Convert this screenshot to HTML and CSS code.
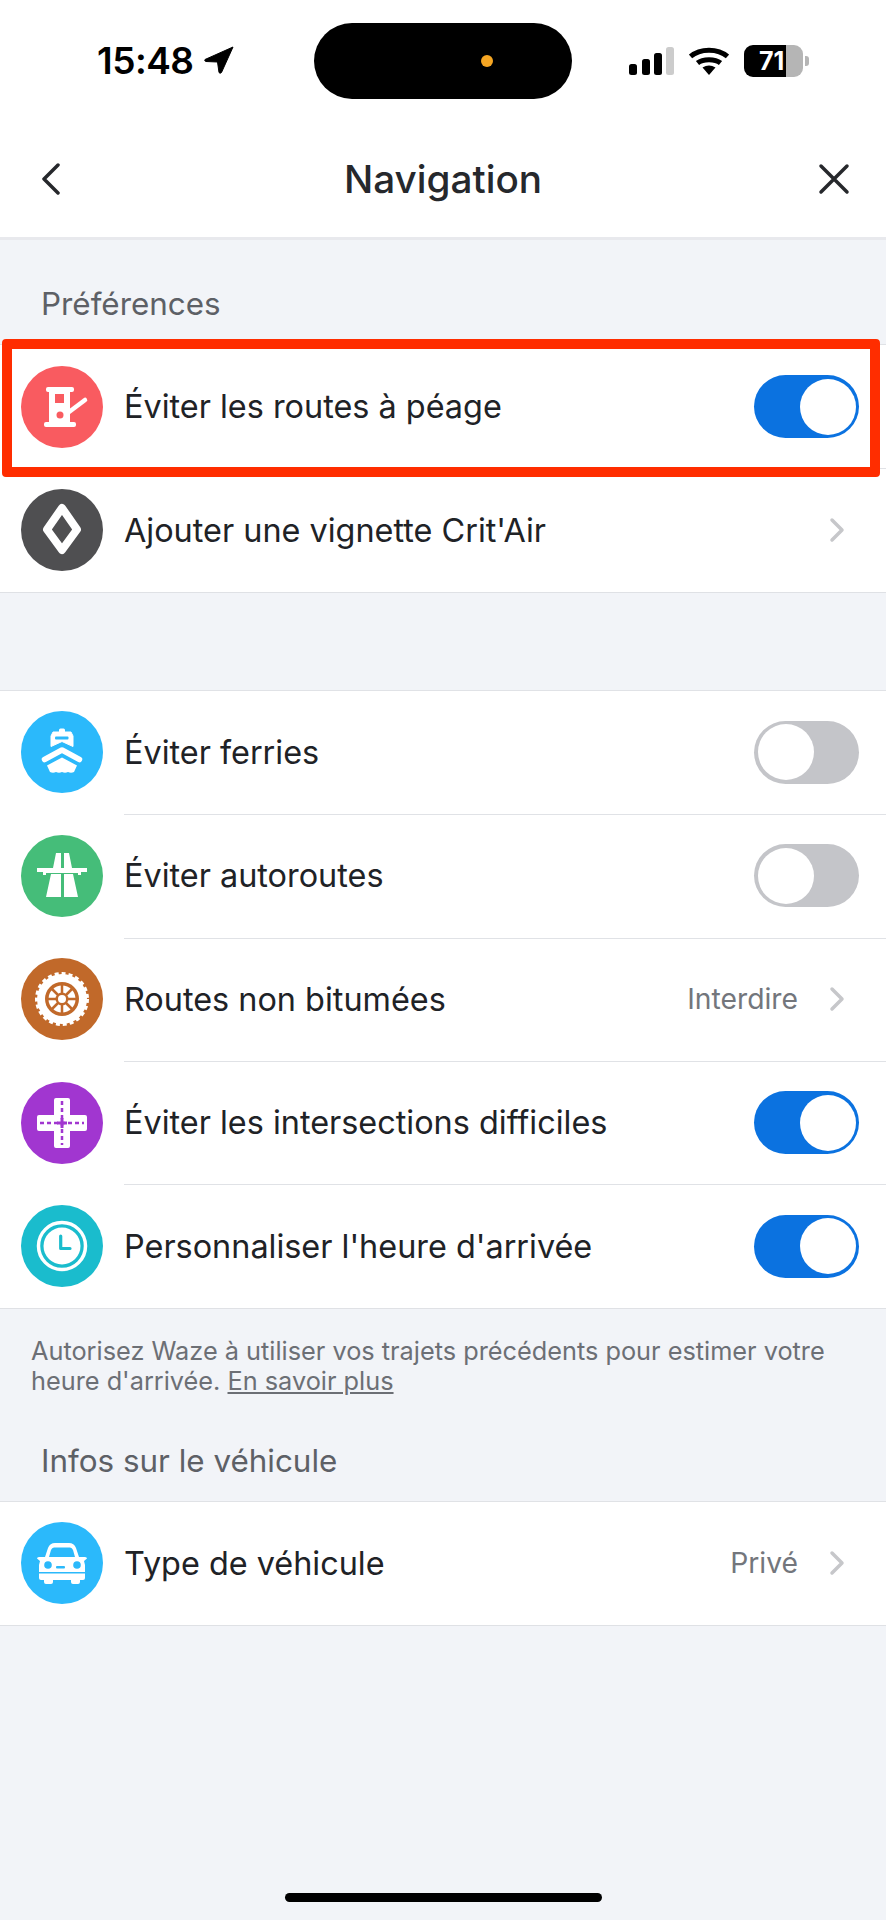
FILE: index.html
```html
<!DOCTYPE html>
<html>
<head>
<title>Navigation</title>
<link rel="stylesheet" href="styles.css">
</head>
<body>

<div class="status-bar">
  <div class="status-left">
    <span class="status-time">15:48</span>
    <svg class="status-arrow" viewBox="0 0 30 28"><path d="M29 1 L1 13.5 Q0 15 2 15.5 L13.5 16 L15 26.5 Q16 28 17.500 26.500 Z" fill="#000" stroke="#000" stroke-linejoin="round"/></svg>
  </div>
  <div class="island"><span class="island-dot"></span></div>
  <div class="status-right">
    <svg class="status-signal" viewBox="0 0 45 28">
      <rect x="0" y="17" width="8" height="11" rx="2.500" fill="#000"/>
      <rect x="13" y="12" width="8" height="16" rx="2.500" fill="#000"/>
      <rect x="25" y="6" width="8" height="22" rx="2.500" fill="#000"/>
      <rect x="37" y="0" width="8" height="28" rx="2.500" fill="#ccc"/>
    </svg>
    <svg class="status-wifi" viewBox="0 0 40 28">
      <path d="M1.500 9.500 C11 1 29 1 38.500 9.500" fill="none" stroke="#000" stroke-width="5"/>
      <path d="M8.500 16 C14 11.500 26 11.500 31.500 16" fill="none" stroke="#000" stroke-width="5"/>
      <path d="M13.500 20.500 Q20 16.500 26.500 20.500 L20 28 Z" fill="#000"/>
    </svg>
    <div class="battery">
      <div class="battery-body"><span class="battery-level">71</span></div>
      <span class="battery-nub"></span>
    </div>
  </div>
</div>

<header class="nav-bar">
  <svg class="nav-icon nav-back" viewBox="0 0 20 32"><path d="M17 2 L3 16 L17 30" fill="none" stroke="#26282c" stroke-width="3.500" stroke-linecap="round" stroke-linejoin="round"/></svg>
  <h1 class="nav-title">Navigation</h1>
  <svg class="nav-icon nav-close" viewBox="0 0 32 32"><path d="M3 3 L29 29 M29 3 L3 29" fill="none" stroke="#26282c" stroke-width="3.500" stroke-linecap="round"/></svg>
</header>

<main class="content">
  <h2 class="section-title">Préférences</h2>

  <section class="group">
    <div class="row highlighted">
      <svg class="row-icon" viewBox="0 0 82 82">
        <circle cx="41" cy="41" r="41" fill="#f95b60"/>
        <rect x="25" y="21" width="28" height="5" rx="2" fill="#fff"/>
        <rect x="28" y="25" width="21" height="32" fill="#fff"/>
        <rect x="34" y="28" width="9" height="9" fill="#f95b60"/>
        <circle cx="39" cy="49" r="3.500" fill="#f95b60"/>
        <rect x="23" y="56" width="32" height="5" rx="2" fill="#fff"/>
        <path d="M48 46 L64 34" fill="none" stroke="#fff" stroke-width="4.500" stroke-linecap="round"/>
      </svg>
      <span class="row-label">Éviter les routes à péage</span>
      <div class="toggle on"><span class="toggle-knob"></span></div>
      <div class="annotation"></div>
    </div>
    <div class="row">
      <svg class="row-icon" viewBox="0 0 82 82">
        <circle cx="41" cy="41" r="41" fill="#4f4f51"/>
        <path d="M41 19 L56 40.500 L41 61 L26 40.500 Z" fill="none" stroke="#fff" stroke-width="8" stroke-linejoin="round"/>
      </svg>
      <span class="row-label">Ajouter une vignette Crit'Air</span>
      <svg class="chevron" viewBox="0 0 16 26"><path d="M3 3 L13 13 L3 23" fill="none" stroke="#c6c7ca" stroke-width="3.500" stroke-linecap="round" stroke-linejoin="round"/></svg>
    </div>
  </section>

  <section class="group second">
    <div class="row">
      <svg class="row-icon" viewBox="0 0 82 82">
        <circle cx="41" cy="41" r="41" fill="#2bb9fb"/>
        <rect x="38" y="17.500" width="6" height="5" rx="1.500" fill="#fff"/>
        <path d="M32 21 H50 L52 25 V35.500 L41 30.500 L30 35.500 V25 Z" fill="#fff" stroke="#fff" stroke-linejoin="round"/>
        <rect x="34" y="25.500" width="13.500" height="3" rx="1" fill="#2bb9fb"/>
        <path d="M23.500 48.500 L41 39 L58.500 48.500" fill="none" stroke="#fff" stroke-width="5.500" stroke-linecap="round" stroke-linejoin="round"/>
        <path d="M26 54.500 L41 46.500 L56 54.500 L53 61 Q50 62.500 47 61 Q44 62.500 41 61 Q38 62.500 35 61 Q32 62.500 29 61 Z" fill="#fff"/>
      </svg>
      <span class="row-label">Éviter ferries</span>
      <div class="toggle"><span class="toggle-knob"></span></div>
    </div>
    <div class="row">
      <svg class="row-icon" viewBox="0 0 82 82">
        <circle cx="41" cy="41" r="41" fill="#45bd79"/>
        <path d="M35 18 H40 V33 H32 Z M43 18 H48 L51 33 H43 Z" fill="#fff"/>
        <path d="M16 33 H66 V37 H60 V40 H57 V38 H25 V40 H22 V37 H16 Z" fill="#fff"/>
        <path d="M30 39 H40 V62 H25 Z M43 39 H52 L57 62 H43 Z" fill="#fff"/>
      </svg>
      <span class="row-label">Éviter autoroutes</span>
      <div class="toggle"><span class="toggle-knob"></span></div>
    </div>
    <div class="row">
      <svg class="row-icon" viewBox="0 0 82 82">
        <circle cx="41" cy="41" r="41" fill="#c1692a"/>
        <circle cx="41" cy="41" r="25" fill="#fff"/>
        <circle cx="41" cy="41" r="25.500" fill="none" stroke="#fff" stroke-width="3" stroke-dasharray="4 3"/>
        <circle cx="41" cy="41" r="17" fill="#c1692a"/>
        <circle cx="41" cy="41" r="13.500" fill="#fff"/>
        <path d="M41 27 V55 M27 41 H55 M31 31 L51 51 M51 31 L31 51" stroke="#c1692a" stroke-width="2.500"/>
        <circle cx="41" cy="41" r="6.500" fill="#c1692a"/>
        <circle cx="41" cy="41" r="4" fill="#fff"/>
      </svg>
      <span class="row-label">Routes non bitumées</span>
      <span class="row-value">Interdire</span>
      <svg class="chevron" viewBox="0 0 16 26"><path d="M3 3 L13 13 L3 23" fill="none" stroke="#c6c7ca" stroke-width="3.500" stroke-linecap="round" stroke-linejoin="round"/></svg>
    </div>
    <div class="row">
      <svg class="row-icon" viewBox="0 0 82 82">
        <circle cx="41" cy="41" r="41" fill="#a136d0"/>
        <path d="M33 18 Q33 16 35 16 H47 Q49 16 49 18 V33 H64 Q66 33 66 35 V47 Q66 49 64 49 H49 V64 Q49 66 47 66 H35 Q33 66 33 64 V49 H18 Q16 49 16 47 V35 Q16 33 18 33 H33 Z" fill="#fff"/>
        <path d="M41 19 V63 M19 41 H63" fill="none" stroke="#a136d0" stroke-width="2.500" stroke-dasharray="4 3"/>
        <path d="M36 41 H46 M41 36 V46" fill="none" stroke="#a136d0" stroke-width="3"/>
      </svg>
      <span class="row-label">Éviter les intersections difficiles</span>
      <div class="toggle on"><span class="toggle-knob"></span></div>
    </div>
    <div class="row">
      <svg class="row-icon" viewBox="0 0 82 82">
        <circle cx="41" cy="41" r="41" fill="#1abccd"/>
        <circle cx="41" cy="41" r="23.500" fill="none" stroke="#fff" stroke-width="3.500"/>
        <circle cx="41" cy="41" r="18.500" fill="#fff"/>
        <path d="M39.700 31 V43.500 H49" fill="none" stroke="#1abccd" stroke-width="3.200" stroke-linecap="round" stroke-linejoin="round"/>
      </svg>
      <span class="row-label">Personnaliser l'heure d'arrivée</span>
      <div class="toggle on"><span class="toggle-knob"></span></div>
    </div>
  </section>

  <p class="footnote">Autorisez Waze à utiliser vos trajets précédents pour estimer votre heure d'arrivée. <a class="footnote-link">En savoir plus</a></p>

  <h2 class="section-title">Infos sur le véhicule</h2>

  <section class="group">
    <div class="row">
      <svg class="row-icon" viewBox="0 0 82 82">
        <circle cx="41" cy="41" r="41" fill="#2bb9fb"/>
        <path d="M34 21 H48 Q53 21 55 26 L58 35 H64 Q66 35 66 36.500 L63 39 L64 43 V56 Q64 58 62 58 H59 V60 Q59 62 57 62 H52 Q50 62 50 60 V58 H32 V60 Q32 62 30 62 H25 Q23 62 23 60 V58 H20 Q18 58 18 56 V43 L19 39 L16 36.500 Q16 35 18 35 H24 L27 26 Q29 21 34 21 Z" fill="#fff"/>
        <path d="M33 25.500 H49 Q51 25.500 52 28 L54 35 H28 L30 28 Q31 25.500 33 25.500 Z" fill="#2bb9fb"/>
        <circle cx="27" cy="43" r="3.800" fill="#2bb9fb"/>
        <circle cx="56" cy="43" r="3.800" fill="#2bb9fb"/>
        <rect x="35" y="44" width="9" height="2.500" rx="1" fill="#2bb9fb"/>
        <rect x="18" y="50" width="46" height="1.500" fill="#2bb9fb"/>
      </svg>
      <span class="row-label">Type de véhicule</span>
      <span class="row-value">Privé</span>
      <svg class="chevron" viewBox="0 0 16 26"><path d="M3 3 L13 13 L3 23" fill="none" stroke="#c6c7ca" stroke-width="3.500" stroke-linecap="round" stroke-linejoin="round"/></svg>
    </div>
  </section>
</main>

<div class="home-indicator"></div>

</body>
</html>
```
FILE: styles.css
```css
* {
  box-sizing: border-box;
}

html, body {
  margin: 0;
  padding: 0;
}

body {
  width: 886px;
  height: 1920px;
  display: flex;
  flex-direction: column;
  overflow: hidden;
  background-color: #f2f4f8;
  font-family: Inter, "Liberation Sans", sans-serif;
  color: #202226;
}

/* Status bar */
.status-bar {
  height: 110px;
  padding-top: 23px;
  display: grid;
  grid-template-columns: 314px 258px 314px;
  align-items: flex-start;
  background-color: #fff;
}

.status-left {
  height: 74px;
  padding-left: 97px;
  display: flex;
  align-items: center;
  gap: 10px;
}

.status-time {
  font-size: 37px;
  font-weight: 600;
  color: #000;
  letter-spacing: -0.5px;
}

.status-arrow {
  width: 30px;
  height: 28px;
}

.island {
  height: 76px;
  border-radius: 38px;
  background-color: #000;
  position: relative;
}

.island-dot {
  position: absolute;
  left: 167px;
  top: 32px;
  width: 12px;
  height: 12px;
  border-radius: 50%;
  background-color: #f5a623;
}

.status-right {
  height: 76px;
  padding-left: 57px;
  display: flex;
  align-items: center;
}

.status-signal {
  width: 45px;
  height: 28px;
}

.status-wifi {
  width: 40px;
  height: 28px;
  margin-left: 15px;
}

.battery {
  margin-left: 15px;
  display: flex;
  align-items: center;
}

.battery-body {
  width: 59px;
  height: 32px;
  border-radius: 9px;
  background: linear-gradient(to right, #000 42px, #b5b5b5 42px);
  display: flex;
  align-items: center;
  padding-left: 15px;
}

.battery-level {
  font-size: 25px;
  font-weight: 700;
  color: #fff;
}

.battery-nub {
  width: 4px;
  height: 10px;
  margin-left: 2px;
  border-radius: 0 3px 3px 0;
  background-color: #b5b5b5;
}

/* Navigation header */
.nav-bar {
  height: 130px;
  padding: 10px 36px 0 41px;
  display: flex;
  align-items: center;
  justify-content: space-between;
  background-color: #fff;
  border-bottom: 3px solid #e8e9ed;
}

.nav-icon {
  display: block;
}

.nav-back {
  width: 20px;
  height: 32px;
}

.nav-close {
  width: 32px;
  height: 32px;
}

.nav-title {
  margin: 0 0 0 7px;
  font-size: 38.700px;
  font-weight: 500;
  color: #26282c;
}

/* Lists */
.content {
  flex: 1;
}

.section-title {
  margin: 0;
  height: 104px;
  padding: 44px 0 0 41px;
  font-size: 31.400px;
  line-height: 40px;
  font-weight: 400;
  color: #5d6066;
}

.group {
  background-color: #fff;
  border-top: 1px solid #e0e2e6;
  border-bottom: 1px solid #dfe1e5;
}

.group.second {
  margin-top: 97px;
}

.row {
  height: 123.400px;
  padding-left: 21px;
  display: flex;
  align-items: center;
  position: relative;
}

.row + .row::before {
  content: "";
  position: absolute;
  top: 0;
  left: 124px;
  right: 0;
  height: 1px;
  background-color: #e0e2e6;
}

.row-icon {
  width: 82px;
  height: 82px;
  flex-shrink: 0;
}

.row-label {
  margin-left: 21px;
  flex: 1;
  font-size: 32.400px;
  color: #202226;
}

.row-value {
  font-size: 28.300px;
  color: #73767c;
}

.chevron {
  width: 16px;
  height: 26px;
  margin: 0 41px 0 35px;
}

.row-value + .chevron {
  margin-left: 31px;
}

.toggle {
  width: 105px;
  height: 63px;
  margin-right: 27px;
  padding: 3.500px;
  border-radius: 32px;
  background-color: #c4c5c9;
}

.toggle.on {
  background-color: #0b72e0;
  display: flex;
  justify-content: flex-end;
}

.toggle-knob {
  display: block;
  width: 56px;
  height: 56px;
  border-radius: 50%;
  background-color: #fff;
}

/* Red box drawn over the first row */
.annotation {
  position: absolute;
  z-index: 1;
  left: 2px;
  right: 6px;
  top: -6px;
  bottom: -9px;
  border: 10px solid #ff2d00;
  border-radius: 4px;
  pointer-events: none;
}

.footnote {
  margin: 0;
  height: 82px;
  padding: 27px 20px 0 31px;
  font-size: 25.300px;
  line-height: 30px;
  color: #6c6f75;
}

.footnote-link {
  text-decoration: underline;
}

.footnote + .section-title {
  height: 110px;
  padding-top: 50px;
}

.home-indicator {
  position: absolute;
  left: 285px;
  top: 1893px;
  width: 317px;
  height: 9px;
  border-radius: 5px;
  background-color: #000;
}
```
